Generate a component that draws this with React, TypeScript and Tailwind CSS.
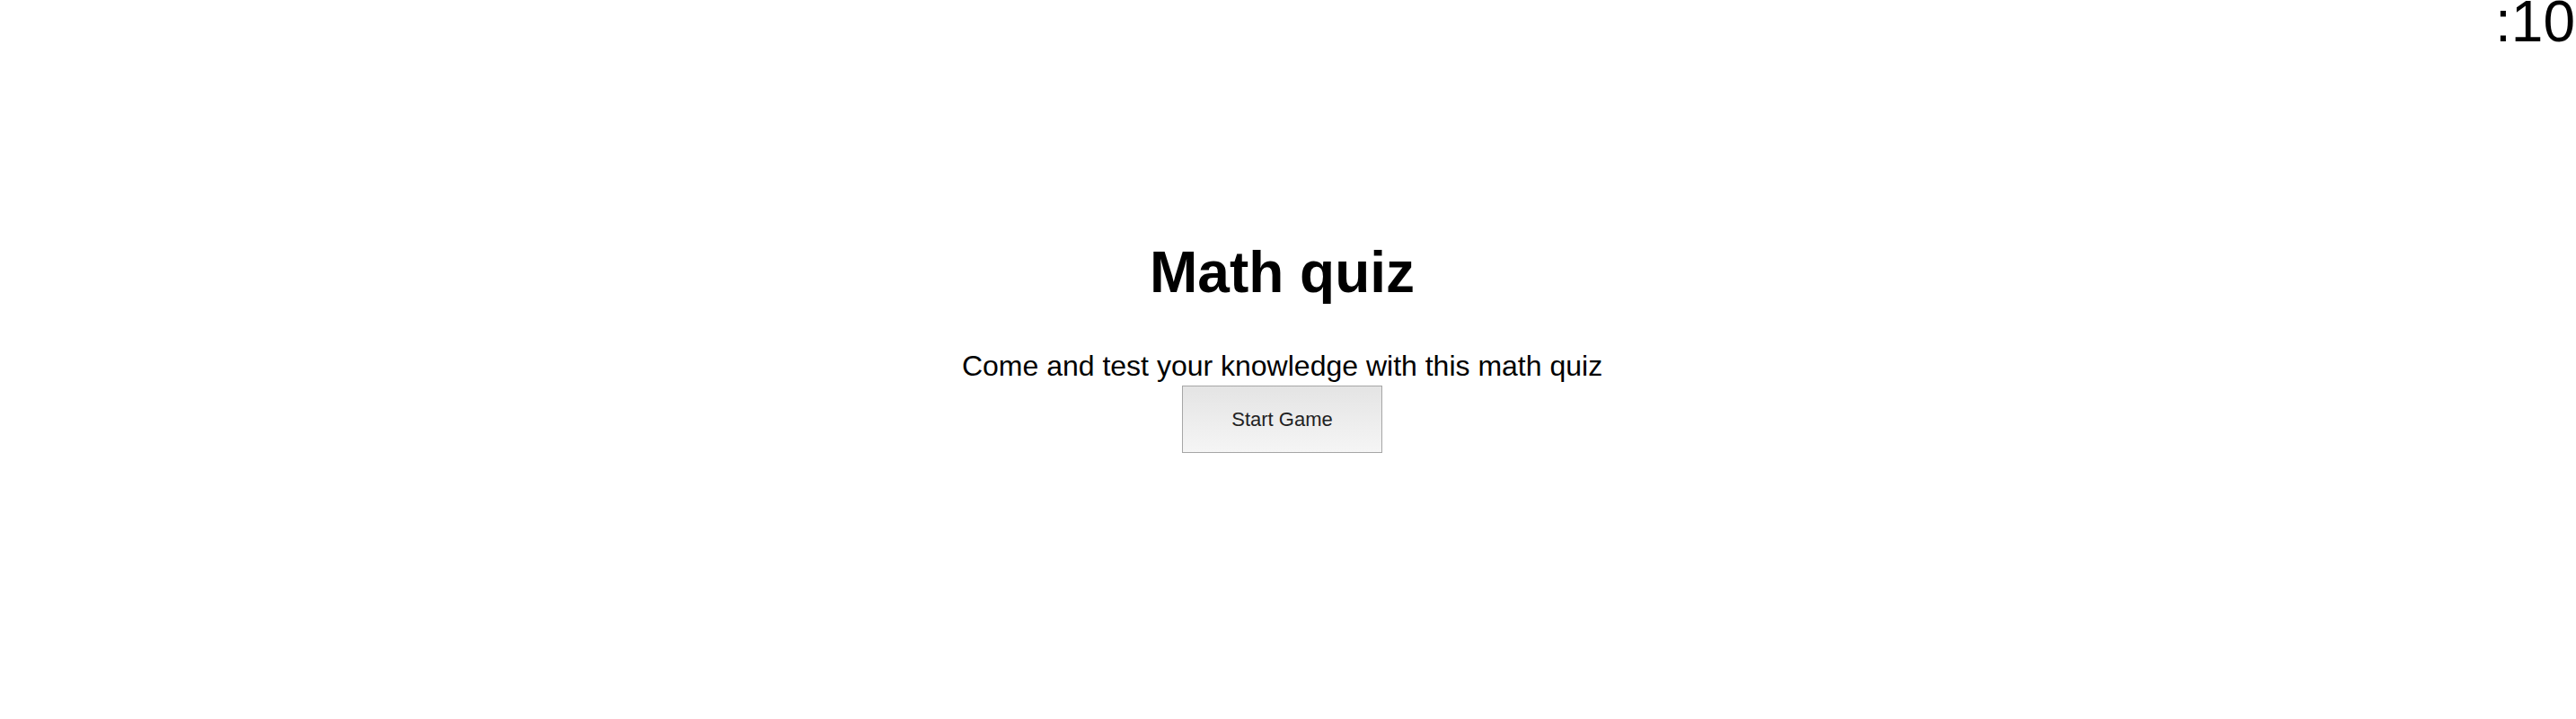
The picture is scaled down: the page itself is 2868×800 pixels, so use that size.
import React from "react";

// 시작 화면 - 타이머 + 제목 + 시작 버튼
const App = () => {
	return (
		<div
			className="relative w-full h-[800px] bg-white text-black overflow-hidden"
			style={{ fontFamily: '"Liberation Sans", Arial, sans-serif' }}
		>
			<div className="absolute top-[-24px] right-[1px] text-[64px] leading-normal font-normal">
				:10
			</div>

			<div className="w-[2855px] flex flex-col items-center pt-[255px]">
				<h1 className="text-[64px] font-bold leading-normal">Math quiz</h1>
				<p className="text-[32px] leading-normal mt-[32px]">
					Come and test your knowledge with this math quiz
				</p>
				<button
					type="button"
					className="w-[223px] h-[75px] -mt-[2px] border border-[#a6a6a6] bg-linear-to-b from-[#e4e4e4] to-[#f5f5f5] text-[22px] text-[#222]"
				>
					Start Game
				</button>
			</div>
		</div>
	);
};

export default App;
